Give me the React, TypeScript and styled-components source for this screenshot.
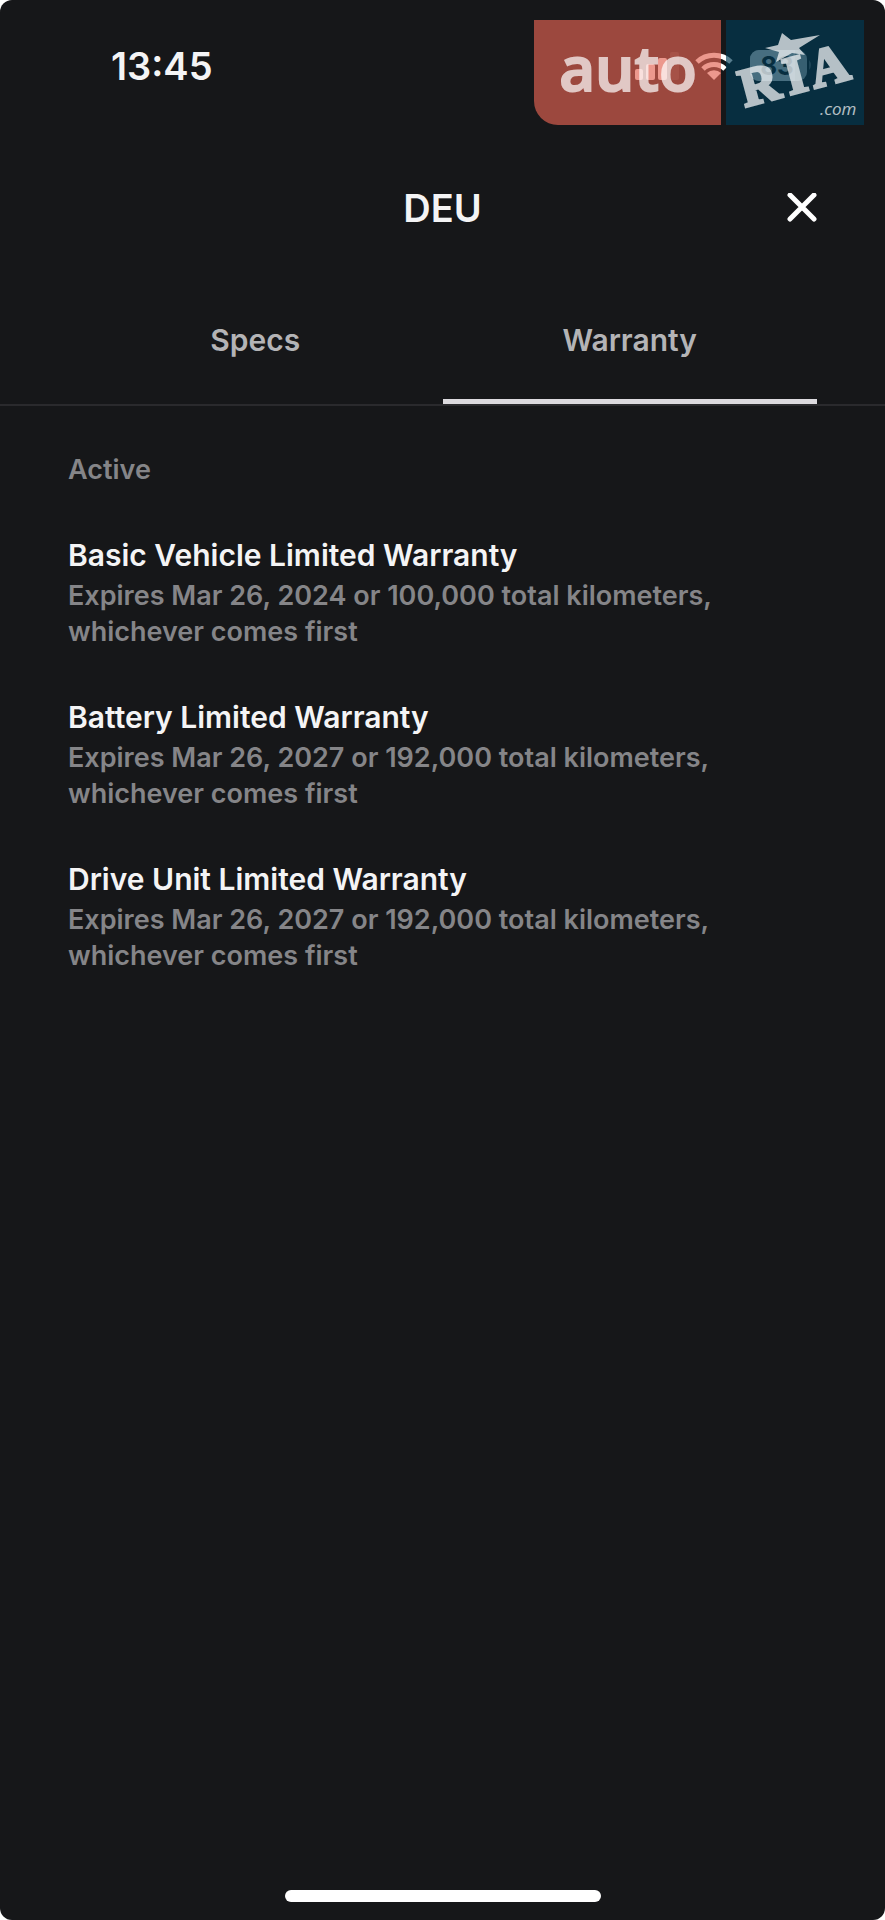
import * as React from "react";
import styled, { createGlobalStyle } from "styled-components";

const colors = {
  background: "#161719",
  title: "#f4f4f5",
  tab: "#b4b4b6",
  muted: "#858588",
  line: "#2a2a2d",
  indicator: "#dcdade"
};

const GlobalStyle = createGlobalStyle`
  * {
    box-sizing: border-box;
  }
  body {
    margin: 0;
    background: #ffffff;
    font-family: Inter, "Liberation Sans", sans-serif;
  }
`;

const Screen = styled.div`
  position: relative;
  display: flex;
  flex-direction: column;
  min-height: 100vh;
  background: ${colors.background};
  border-radius: 12px;
  overflow: hidden;
`;

const StatusBar = styled.div`
  display: flex;
  align-items: center;
  justify-content: space-between;
  height: 132px;
  padding: 0 74px 0 111px;
`;

const Clock = styled.time`
  color: ${colors.title};
  font-size: 38px;
  font-weight: 600;
  line-height: 44px;
`;

const StatusIcons = styled.svg`
  display: block;
  width: 176px;
  height: 36px;
`;

const Header = styled.header`
  display: grid;
  grid-template-columns: 1fr auto 1fr;
  align-items: center;
  height: 152px;
  padding: 0 64px;
`;

const HeaderTitle = styled.h1`
  grid-column: 2;
  margin: 0;
  color: ${colors.title};
  font-size: 38px;
  font-weight: 600;
  line-height: 44px;
`;

const CloseButton = styled.button`
  justify-self: end;
  padding: 4px;
  border: 0;
  background: none;
  color: #ffffff;
  cursor: pointer;
`;

const CloseIcon = styled.svg`
  display: block;
  width: 30px;
  height: 30px;
`;

const Tabs = styled.div`
  display: flex;
  padding: 0 68px;
  border-bottom: 2px solid ${colors.line};
`;

const Tab = styled.button<{ $active?: boolean }>`
  flex: 1;
  height: 120px;
  padding: 0 0 4px;
  border: 0;
  border-bottom: 5px solid
    ${props => (props.$active ? colors.indicator : "transparent")};
  background: none;
  color: ${colors.tab};
  font-family: inherit;
  font-size: 30px;
  font-weight: 600;
  cursor: pointer;
`;

const Content = styled.main`
  flex: 1;
  padding: 46px 68px;
`;

const SectionLabel = styled.h2`
  margin: 0 0 48px;
  color: ${colors.muted};
  font-size: 27px;
  font-weight: 600;
  line-height: 36px;
`;

const WarrantyList = styled.ul`
  display: flex;
  flex-direction: column;
  gap: 48px;
  margin: 0;
  padding: 0;
  list-style: none;
`;

const WarrantyName = styled.h3`
  margin: 0 0 4px;
  color: ${colors.title};
  font-size: 30px;
  font-weight: 600;
  line-height: 38px;
`;

const WarrantyTerms = styled.p`
  max-width: 680px;
  margin: 0;
  color: ${colors.muted};
  font-size: 27px;
  font-weight: 600;
  line-height: 36px;
`;

const HomeIndicator = styled.div`
  align-self: center;
  width: 316px;
  height: 12px;
  margin-bottom: 18px;
  border-radius: 6px;
  background: #ffffff;
`;

const Watermark = styled.div`
  position: absolute;
  top: 20px;
  right: 21px;
  display: flex;
  gap: 5px;
`;

const WatermarkAuto = styled.div`
  width: 187px;
  height: 105px;
  border-radius: 0 0 0 24px;
  background: rgba(226, 98, 82, 0.66);
`;

const WatermarkRia = styled.div`
  width: 138px;
  height: 105px;
  background: rgba(0, 59, 85, 0.66);
`;

const Mark = styled.svg`
  display: block;
  width: 100%;
  height: 100%;
  fill: #ffffff;
  opacity: 0.7;
`;

const warranties = [
  { name: "Basic Vehicle Limited Warranty", date: "Mar 26, 2024", distance: "100,000" },
  { name: "Battery Limited Warranty", date: "Mar 26, 2027", distance: "192,000" },
  { name: "Drive Unit Limited Warranty", date: "Mar 26, 2027", distance: "192,000" }
];

const PhoneStatus = () => (
  <StatusIcons viewBox="0 0 176 36" aria-label="Signal, Wi-Fi, battery 83">
    <g fill="#ffffff">
      <rect x="0" y="21" width="8" height="11" rx="2" />
      <rect x="11" y="16" width="9" height="16" rx="2" />
      <rect x="23" y="10" width="9" height="22" rx="2" />
      <rect x="35" y="4" width="9" height="28" rx="2" opacity="0.12" />
    </g>
    <g fill="none" stroke="#ffffff" strokeWidth="5">
      <path d="M62 14a25 25 0 0 1 34 0" />
      <path d="M68 21a16 16 0 0 1 22 0" />
    </g>
    <path d="M72 25a10 10 0 0 1 14 0l-7 7z" fill="#ffffff" />
    <rect x="115" y="2" width="57" height="31" rx="9" fill="#a2a3a6" />
    <path d="M124 2h36v31h-36a9 9 0 0 1-9-9V11a9 9 0 0 1 9-9z" fill="#cfcfd2" />
    <path d="M174 12q4 5 0 10z" fill="#55565a" />
    <text x="142" y="27" fill={colors.background} fontSize="26" fontWeight="700" textAnchor="middle">
      83
    </text>
  </StatusIcons>
);

const AutoRiaMark = () => (
  <Watermark>
    <WatermarkAuto>
      <Mark viewBox="0 0 187 105">
        <text
          x="94"
          y="71"
          fontFamily="Open Sans, sans-serif"
          fontSize="62"
          fontWeight="600"
          textAnchor="middle"
          stroke="#ffffff"
          strokeWidth="2"
        >
          auto
        </text>
      </Mark>
    </WatermarkAuto>
    <WatermarkRia>
      <Mark viewBox="0 0 138 105">
        <path d="M56 13L65 20 94 15 73 28 79 35 66 33 50 42 53 32 39 28 52 25z" />
        <g transform="translate(19 87) rotate(-15)" stroke="#ffffff" strokeWidth="3">
          <text x="0 46 72" fontFamily="Liberation Serif, serif" fontSize="54" fontWeight="700">
            RIA
          </text>
        </g>
        <text x="94" y="95" fontFamily="Open Sans, sans-serif" fontSize="17" fontStyle="italic">
          .com
        </text>
      </Mark>
    </WatermarkRia>
  </Watermark>
);

export default class App extends React.Component {
  public state = {
    tab: "Warranty"
  };

  public renderTab(label: string) {
    const active = this.state.tab === label;
    return (
      <Tab
        role="tab"
        aria-selected={active}
        $active={active}
        onClick={() => this.setState({ tab: label })}
      >
        {label}
      </Tab>
    );
  }

  public render() {
    return (
      <Screen>
        <GlobalStyle />
        <StatusBar>
          <Clock>13:45</Clock>
          <PhoneStatus />
        </StatusBar>
        <Header>
          <HeaderTitle>DEU</HeaderTitle>
          <CloseButton aria-label="Close">
            <CloseIcon viewBox="0 0 30 30" fill="none" stroke="currentColor" strokeWidth="5" strokeLinecap="round">
              <path d="M3 2l24 24M27 2L3 26" />
            </CloseIcon>
          </CloseButton>
        </Header>
        <Tabs role="tablist">
          {this.renderTab("Specs")}
          {this.renderTab("Warranty")}
        </Tabs>
        <Content>
          <SectionLabel>Active</SectionLabel>
          <WarrantyList>
            {warranties.map(item => (
              <li key={item.name}>
                <WarrantyName>{item.name}</WarrantyName>
                <WarrantyTerms>
                  {`Expires ${item.date} or ${item.distance} total kilometers, whichever comes first`}
                </WarrantyTerms>
              </li>
            ))}
          </WarrantyList>
        </Content>
        <HomeIndicator />
        <AutoRiaMark />
      </Screen>
    );
  }
}
